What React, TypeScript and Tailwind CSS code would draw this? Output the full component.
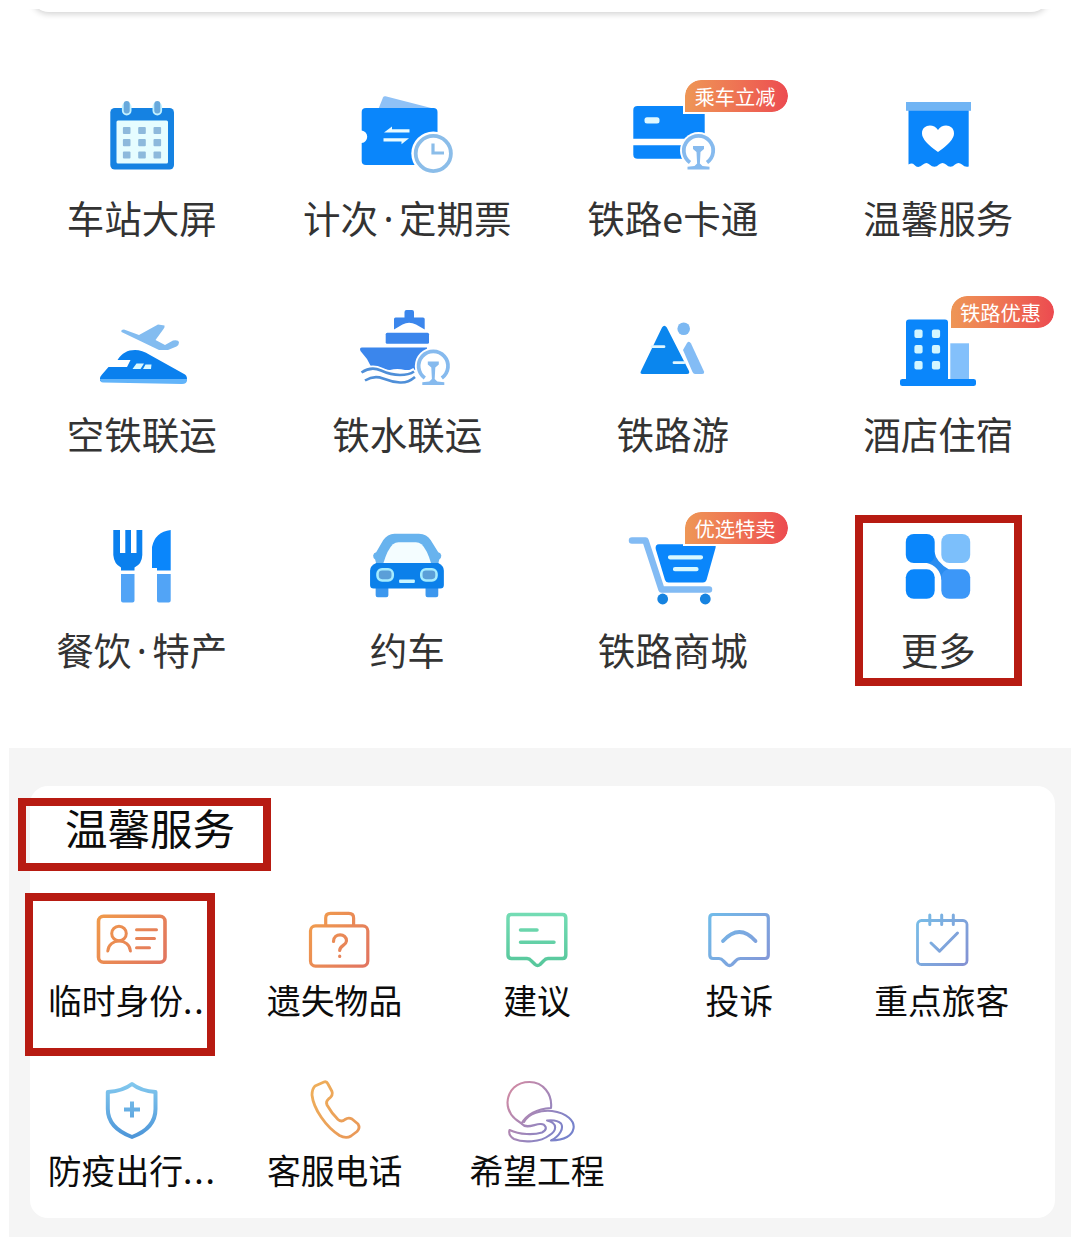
import type { ReactNode } from 'react'

interface Item {
  label: string
  icon: ReactNode
  badge?: string
  marked?: boolean
  clipped?: boolean
}

function BigIcon({ children }: { children: ReactNode }) {
  return (
    <svg viewBox="0 0 120 90" className="h-[90px] w-[120px] shrink-0" fill="none" aria-hidden="true">
      {children}
    </svg>
  )
}

function LineIcon({
  id,
  from,
  to,
  width = 3,
  vertical,
  children,
}: {
  id: string
  from: string
  to: string
  width?: number
  vertical?: boolean
  children: ReactNode
}) {
  return (
    <svg viewBox="0 0 90 70" className="h-[70px] w-[90px] shrink-0" fill="none" aria-hidden="true">
      <defs>
        <linearGradient
          id={id}
          gradientUnits="userSpaceOnUse"
          x1={vertical ? 45 : 12}
          y1="8"
          x2={vertical ? 45 : 76}
          y2={vertical ? 64 : 56}
        >
          <stop stopColor={from} />
          <stop offset="1" stopColor={to} />
        </linearGradient>
      </defs>
      <g stroke={`url(#${id})`} strokeWidth={width} strokeLinecap="round" strokeLinejoin="round">
        {children}
      </g>
    </svg>
  )
}

// China Railway mark: open ring with a rail section in it
function RailMark({ x, y }: { x: number; y: number }) {
  return (
    <g transform={`translate(${x} ${y})`}>
      <circle r="18.5" fill="#fff" />
      <path d="M-13 13H13V21H-13Z" fill="#fff" />
      <path d="M-8.5 12A14.7 14.7 0 1 1 8.5 12" stroke="#86baee" strokeWidth="3.8" />
      <path d="M-5.5-4.5h11v3L2 1.5 1.4 13l2.6 2.5 7 .8v2.7h-22v-2.7l7-.8 2.6-2.5L-2 1.5-5.5-1.5z" fill="#86baee" />
    </g>
  )
}

const services: Item[] = [
  {
    label: '车站大屏',
    icon: (
      <BigIcon>
        <rect x="28.3" y="16" width="63.7" height="61.5" rx="4.5" fill="#1582e2" />
        <rect x="34.5" y="28.5" width="51.5" height="43" rx="1.5" fill="#e6fdff" />
        {[38.5, 50.7, 63].map((y) =>
          [44.7, 60, 75.3].map((x) => (
            <rect key={`${x}-${y}`} x={x - 3.8} y={y - 3.6} width="7.6" height="7.2" rx="1" fill="#8db9dc" />
          )),
        )}
        {[44.7, 75.3].map((x) => (
          <g key={x}>
            <rect x={x - 4.8} y="10" width="9.6" height="13.5" rx="4.8" fill="#c2f1ff" />
            <rect x={x - 3} y="9" width="6" height="12.5" rx="3" fill="#69a9dc" />
          </g>
        ))}
      </BigIcon>
    ),
  },
  {
    label: '计次·定期票',
    icon: (
      <BigIcon>
        <path d="M31 18 36 5.5Q36.7 4 38.5 4.3L90 17.5Z" fill="#8fc1f6" />
        <path
          d="M19 16H86.3Q90.5 16 90.5 20V69Q90.5 73 86.3 73H19Q14.7 73 14.7 69V51A6.3 6.3 0 0 0 14.7 38.5V20Q14.7 16 19 16Z"
          fill="#0a86fb"
        />
        <path d="M37 40.5 45 34.5V37.3H62.5V40.5ZM62 46.2 54.5 52.2V49.4H36.5V46.2Z" fill="#e9fbff" />
        <circle cx="86.3" cy="61.5" r="22" fill="#fff" />
        <circle cx="86.3" cy="61.5" r="17.6" stroke="#8bbde9" strokeWidth="3.8" />
        <path d="M86 51.5V61H97" stroke="#8bbde9" strokeWidth="3.2" />
      </BigIcon>
    ),
  },
  {
    label: '铁路e卡通',
    badge: '乘车立减',
    icon: (
      <BigIcon>
        <path d="M24.5 14H91.7V46.8H20.3V18Q20.3 14 24.5 14Z" fill="#0a86fb" />
        <path d="M20.3 53.3H80V66.8H24.5Q20.3 66.8 20.3 62.5Z" fill="#0a86fb" />
        <rect x="31.5" y="25.2" width="15" height="6.2" rx="2.5" fill="#dff8ff" />
        <RailMark x={85.5} y={58.5} />
      </BigIcon>
    ),
  },
  {
    label: '温馨服务',
    icon: (
      <BigIcon>
        <path
          d="M30.5 18H90.7V74.5Q87 75.5 84 72.5Q80.5 69.5 77 72.5Q72.5 77 68 72.5Q64.5 69.5 61 72.5Q56.5 77 51.5 72.5Q48.5 69.5 45 72.5Q40 77 36.5 73Q34 70.5 30.5 72.5Z"
          fill="#0a86fb"
        />
        <rect x="28" y="10" width="65" height="8.8" fill="#70b4f4" />
        <path d="M60 60Q44 49 44 41.5C44 32.5 55.5 31 60 38C64.500 31 76 32.5 76 41.5Q76 49 60 60Z" fill="#fff" />
      </BigIcon>
    ),
  },
  {
    label: '空铁联运',
    icon: (
      <BigIcon>
        <path
          d="M18 70Q18 68.500 20 66.5L26.5 59H45L48.500 52H35.5C40 45 45.5 42 53 42Q60 42 68 47L103 66.5Q106 69 104.500 73H18Z"
          fill="#0a80ee"
        />
        <path d="M18 71H105V72Q105 76 100 76L21 74.5Q18 74.5 18 71Z" fill="#62b4fa" />
        <path d="M54.5 55.5H62L58.5 61H50.5ZM63.5 56.5H69.5L69 61H61Z" fill="#d9f8ff" />
        <path
          d="M39.5 24Q38.5 21.5 42 21.500L57 27 76 16.5 82.5 17.500Q83 19 81.5 21L73.500 32 83 37 91 32.5Q96.5 31.5 97 34.5Q97 37 94.5 38.500L86 42H77Z"
          fill="#83bcf0"
        />
      </BigIcon>
    ),
  },
  {
    label: '铁水联运',
    icon: (
      <BigIcon>
        <path
          d="M47 11Q47 9.5 48.5 9.5H57.500V4Q57.5 2 59.5 2H65Q67 2 67 4V9.5H76Q77.7 9.5 77.7 11V21.5L69 16.5Q62 13 55.5 16.5L47 21.5Z"
          fill="#3b86ec"
        />
        <rect x="38.7" y="24.7" width="43.3" height="11" rx="1.5" fill="#3b86ec" />
        <path d="M15 39.5H80V62H58Q50 60 43 62L25 60.5 20 51 13.5 43Q12 39.5 15 39.5Z" fill="#3b86ec" />
        <path d="M14 65Q24 57.5 34 62.5T53 67T68 62.5" stroke="#fff" strokeWidth="6" />
        <path d="M14.500 64.5Q24 58 34 62.5T53 67T67 63.5" stroke="#4f8fd8" strokeWidth="2.6" />
        <path d="M18 72.5Q27 67 36 70.5T53 74.5T68 69" stroke="#4f8fd8" strokeWidth="2.6" />
        <RailMark x={86.3} y={58} />
      </BigIcon>
    ),
  },
  {
    label: '铁路游',
    icon: (
      <BigIcon>
        <path d="M49 19.5Q51.3 16 53.8 19.5L76 63Q77 66 74 66H29.500Q26.5 66 28 63Z" fill="#0a86ee" />
        <path d="M39 38.7H51M61 54.7H71" stroke="#dff6ff" strokeWidth="2.8" strokeLinecap="round" />
        <circle cx="70.7" cy="20.7" r="6.3" fill="#7cb8f2" />
        <path d="M70 42 74 35Q76 32.5 78 35.5L91 63.5Q91.5 66 89 66H82Q80.5 66 79.500 64Z" fill="#83bcf5" />
      </BigIcon>
    ),
  },
  {
    label: '酒店住宿',
    badge: '铁路优惠',
    icon: (
      <BigIcon>
        <path d="M72.3 35.3H91V71H72.3Z" fill="#83c0fb" />
        <path
          d="M31 11.5H67Q70 11.5 70 14.5V71H95.5Q98 71 98 73V76Q98 78 95.5 78H24.5Q22 78 22 76V73Q22 71 24.5 71H28V14.5Q28 11.5 31 11.5Z"
          fill="#0a86fb"
        />
        {[25.7, 41.3, 57.2].map((y) =>
          [40.5, 58].map((x) => (
            <rect key={`${x}-${y}`} x={x - 4.1} y={y - 4.2} width="8.2" height="8.4" rx="2" fill="#d3f6ff" />
          )),
        )}
      </BigIcon>
    ),
  },
  {
    label: '餐饮·特产',
    icon: (
      <BigIcon>
        <path
          d="M31.3 6H38V29H43.3V6H49V29H54.5V6H60.300V31Q60 40 52.5 43.500V46.5H39V43.5Q32 40 31.3 31Z"
          fill="#0a80ee"
        />
        <path d="M88.7 6V46.5H75V44H70V23Q73 8 88.7 6Z" fill="#0a86fb" />
        <path
          d="M39 50H52.5V76.500Q52.5 78.5 50.5 78.5H41Q39 78.5 39 76.5ZM75 50H88.7V76.5Q88.7 78.5 86.7 78.5H77Q75 78.5 75 76.500Z"
          fill="#52a4f6"
        />
      </BigIcon>
    ),
  },
  {
    label: '约车',
    icon: (
      <BigIcon>
        <g transform="translate(2.700 -.2) scale(1.018 1.02)">
          <path
            d="M26 39 25 35Q23 34 23 31Q23.500 28.5 26 28L33 16Q37 10 44 9.8H68Q76 10 79.500 16L87 28Q89.5 28.5 90 31Q90 34 88 35L87 39Z"
            fill="#68b3ee"
          />
          <path d="M33 39Q37 25 42.500 20Q45 18 48 18H65Q68 18 70.5 20Q76 25 80 39Z" fill="#f4fdff" />
          <path
            d="M25.5 60H38V70Q38 72 36 72H27.5Q25.5 72 25.5 70ZM74.5 60H87V70Q87 72 85 72H76.5Q74.5 72 74.5 70Z"
            fill="#3c97ee"
          />
          <path
            d="M26 38.5H87Q92.5 41 92.5 46V60Q92.5 63.5 89 63.5H23.5Q20 63.5 20 60V46Q20 41 26 38.5Z"
            fill="#0b80ea"
          />
          <rect x="27.3" y="44.5" width="15" height="11" rx="4.5" fill="#5b9fd8" stroke="#a5ecff" strokeWidth="2.5" />
          <rect x="70.3" y="44.5" width="15" height="11" rx="4.5" fill="#5b9fd8" stroke="#a5ecff" strokeWidth="2.5" />
          <rect x="48.5" y="54.5" width="15.5" height="3.5" rx="1" fill="#c8f4ff" />
        </g>
      </BigIcon>
    ),
  },
  {
    label: '铁路商城',
    badge: '优选特卖',
    icon: (
      <BigIcon>
        <path
          d="M19 16.500H32.5L48.5 65.500H96"
          stroke="#82bbf4"
          strokeWidth="6.500"
          strokeLinejoin="round"
          strokeLinecap="round"
        />
        <path
          d="M46 20.3H100Q103.5 20.5 102.5 24L93.5 56Q92.5 58.5 90 58.5H55.5Q53 58.5 52 56L42.7 25Q42 20.5 46 20.3Z"
          fill="#0a86fb"
        />
        <path d="M57 33.3H88M62 45.2H83.5" stroke="#d8f8ff" strokeWidth="4.2" strokeLinecap="round" />
        <circle cx="49.7" cy="75" r="5.4" fill="#1683e0" />
        <circle cx="92.3" cy="75" r="5.4" fill="#1683e0" />
      </BigIcon>
    ),
  },
  {
    label: '更多',
    marked: true,
    icon: (
      <BigIcon>
        <rect x="63.3" y="10" width="28.9" height="29" rx="8" fill="#7cbffb" />
        <rect x="27.8" y="45.3" width="28.9" height="29.5" rx="8" fill="#0a86fb" />
        <path d="M56.5 28Q58 38 71 45.5L63.5 56Q62 42 48 38.8Z" fill="#2b8df0" />
        <rect x="27.8" y="10" width="28.9" height="29" rx="8" fill="#0a86fb" />
        <rect x="63.3" y="45.3" width="28.9" height="29.5" rx="8" fill="#3c97f8" />
      </BigIcon>
    ),
  },
]

const careItems: Item[] = [
  {
    label: '临时身份..',
    marked: true,
    clipped: true,
    icon: (
      <LineIcon id="idcard" from="#f09a4a" to="#e2765f">
        <rect x="11.5" y="11.3" width="66.5" height="46" rx="5" strokeWidth="3.6" />
        <circle cx="32" cy="28.5" r="7.3" />
        <path d="M20.8 46C21.5 32.8 42.7 32.8 43.4 46M49.5 24.7H69.5M49.5 33.5H67.500M49.5 42.7H62.5" />
      </LineIcon>
    ),
  },
  {
    label: '遗失物品',
    icon: (
      <LineIcon id="lost" from="#f3a34a" to="#e2765f" width={3.2}>
        <rect x="20.5" y="20.8" width="57.3" height="40.3" rx="5" />
        <path d="M35.7 20V13Q35.7 8.3 40.5 8.3H58.8Q63.6 8.3 63.600 13V20" />
        <path d="M43.5 36.5C43.5 27.5 57 28 56.5 36C56.2 40.5 49.7 40.5 49.7 45.500M49.7 51V51.5" />
      </LineIcon>
    ),
  },
  {
    label: '建议',
    icon: (
      <LineIcon id="advice" from="#74dcb4" to="#55c69a" vertical width={3.5}>
        <path d="M19 9.5H70.5Q73.8 9.5 73.8 13V50Q73.8 53.500 70.5 53.5H56Q53.5 53.5 51.5 56L48 59.5Q45.6 61.5 43.2 59.5L39.5 56Q37.5 53.5 35 53.5H19.5Q16 53.5 16 50V13Q16 9.5 19 9.5Z" />
        <path d="M28.5 25H45M28.5 37.3H62" />
      </LineIcon>
    ),
  },
  {
    label: '投诉',
    icon: (
      <LineIcon id="complaint" from="#70bdea" to="#8497d8" width={3.2}>
        <path d="M19 9.5H71Q74.3 9.5 74.3 13V50Q74.3 53.5 71 53.5H46.5Q43.5 53.5 41.5 56L38 59.5Q35.5 61.500 33 59.5L29.5 56Q27.5 53.5 25 53.5H19Q15.8 53.5 15.8 50V13Q15.8 9.500 19 9.5Z" />
        <path d="M29 36Q45.5 18 61.5 36" strokeWidth="3.8" />
      </LineIcon>
    ),
  },
  {
    label: '重点旅客',
    icon: (
      <LineIcon id="priority" from="#76c3ea" to="#8490d2">
        <rect x="20.5" y="15.5" width="49.5" height="44" rx="4" strokeWidth="2.8" />
        <path d="M32.8 10V19.5M44.7 10V19.5M56.3 10V19.5" />
        <path d="M34 38 42.5 46.2 60.5 28" />
      </LineIcon>
    ),
  },
  {
    label: '防疫出行...',
    icon: (
      <LineIcon id="shield" from="#82c8ee" to="#4b94d8" vertical width={4}>
        <path d="M45 9Q54 16 68.5 17V34C68.5 50 57 57.5 45 62C33 57.5 20.8 50 20.8 34V17Q36 16 45 9Z" />
        <path d="M45 26.5V42.5M37 34.5H53" strokeLinecap="butt" />
      </LineIcon>
    ),
  },
  {
    label: '客服电话',
    icon: (
      <LineIcon id="phone" from="#efb15a" to="#e99758" width={2.8}>
        <path d="M34 7 25 11Q22 14 22 20C23.5 34 36 52 49.5 60.5Q56 64 61 61L67 56.5Q70.500 53 68 49L62 44Q58.5 42 55 44.500Q51.5 47.500 48 44.5Q41.5 38 37 30Q35.5 26.500 38.5 24Q43.500 20.5 42 16.5L38 9Q36.5 6 34 7Z" />
      </LineIcon>
    ),
  },
  {
    label: '希望工程',
    icon: (
      <LineIcon id="hope" from="#d98ba0" to="#7682cc" width={2.1}>
        <path d="M29.5 48.5C20 43 15.5 36 15.5 27.5C16 15 25 7 37.5 7C51 7 60.5 19 59 33C45 34 35 39 29.5 48.5Z" />
        <path d="M32 47C37 38 49 35 60 36C75 38 83 46 81.5 53.5C80 61 72 65 59 65.5C68 61 72 53 69 48.500Q65 44.5 55 45.5C66 48 65 56 57 60.5C49 67 31 68 22 64Q16 60.5 17.5 55C28 60 42 60 50 57.5C57 54 53 48.5 48 49C42 49.5 34 54 30 49" />
      </LineIcon>
    ),
  },
]

// The middle dot sits in a narrow slot and the trailing dots are spaced out
function Label({ text }: { text: string }) {
  return text.split(/(·|\.+)/).map((part, i) => {
    if (part === '·') {
      return (
        <span key={i} className="inline-block w-[21px] text-center font-['Noto_Sans']">
          ·
        </span>
      )
    }
    if (part.startsWith('.')) {
      return (
        <span key={i} className="tracking-[1.8px]">
          {part}
        </span>
      )
    }
    return part
  })
}

function Badge({ text }: { text: string }) {
  return (
    <span className="absolute -top-[14px] left-[143px] flex h-[36px] w-[107px] items-center justify-center rounded-[18px] rounded-bl-none border-2 border-white bg-gradient-to-r from-[#ee9656] to-[#ec4a50] bg-clip-padding pr-[3px] text-[20.3px] leading-none text-white">
      {text}
    </span>
  )
}

function ServiceCell({ item }: { item: Item }) {
  return (
    <li className="relative flex h-[216px] flex-col items-center">
      {item.icon}
      <span className="mt-[7px] h-[56px] text-[37.5px] leading-[56px] whitespace-nowrap text-[#333]">
        <Label text={item.label} />
      </span>
      {item.badge && <Badge text={item.badge} />}
      {item.marked && (
        <span className="absolute -top-[9px] left-[49px] h-[171px] w-[167px] border-8 border-[#b71b12]" />
      )}
    </li>
  )
}

function CareCell({ item }: { item: Item }) {
  return (
    <li className="relative flex h-[170px] flex-col items-center">
      {item.icon}
      <span
        className={`mt-px h-[48px] text-[33.8px] leading-[48px] whitespace-nowrap text-[#0c0c0c] ${item.clipped ? 'pr-[11px]' : ''}`}
      >
        <Label text={item.label} />
      </span>
      {item.marked && (
        <span className="absolute -top-[12px] -left-[6px] h-[163px] w-[190px] border-8 border-[#b71b12]" />
      )}
    </li>
  )
}

export default function App() {
  return (
    <main className="flex h-[1246px] w-[1080px] flex-col overflow-hidden bg-white px-[9px] font-['Noto_Sans_CJK_SC',sans-serif]">
      <div className="mt-[9px] h-[16px] shrink-0 overflow-hidden px-[22px]">
        <div className="-mt-[20px] h-[23px] rounded-b-[18px] bg-white shadow-[0_2px_6px_rgba(0,0,0,0.18)]" />
      </div>
      <ul className="mt-[67px] grid h-[656px] shrink-0 grid-cols-4 content-start">
        {services.map((item) => (
          <ServiceCell key={item.label} item={item} />
        ))}
      </ul>
      <div className="h-[489px] shrink-0 bg-[#f5f5f5] pt-[38px] pl-[21px]">
        <section className="flex h-[432px] w-[1025px] flex-col rounded-[18px] bg-white">
          <div className="relative mt-[16px] flex h-[56px] shrink-0 items-start pl-[35px]">
            <h2 className="-mt-[3px] text-[42.5px] leading-[56px] text-[#0c0c0c]">温馨服务</h2>
            <span className="absolute -top-[4px] -left-[12px] h-[73px] w-[253px] border-8 border-[#b71b12]" />
          </div>
          <ul className="mt-[47px] ml-px grid w-[1012px] grid-cols-5">
            {careItems.map((item) => (
              <CareCell key={item.label} item={item} />
            ))}
          </ul>
        </section>
      </div>
    </main>
  )
}
